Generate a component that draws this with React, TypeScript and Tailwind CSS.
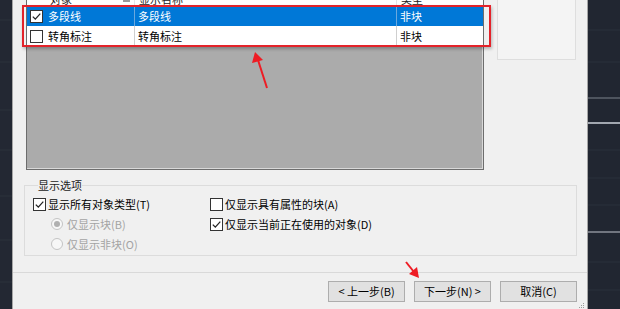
import React from 'react';

function Check({ checked }: { checked?: boolean }) {
  return (
    <span className="w-[13px] h-[13px] shrink-0 border border-[#333333] bg-white flex items-center justify-center">
      {checked && (
        <svg width="11" height="11" viewBox="0 0 11 11">
          <path d="M1.8 5.6 L4.3 8.1 L9.3 2.6" fill="none" stroke="#222222" strokeWidth="1.3" />
        </svg>
      )}
    </span>
  );
}

function Radio({ selected }: { selected?: boolean }) {
  return (
    <span className="w-[12px] h-[12px] shrink-0 rounded-full border border-[#c4c4c4] bg-[#f7f7f7] flex items-center justify-center">
      {selected && <span className="w-[6px] h-[6px] rounded-full bg-[#b0b0b0]" />}
    </span>
  );
}

function CadGrid({ lines }: { lines: { y: number; c: string; w?: number }[] }) {
  return (
    <svg className="w-full h-full" width="100%" height="309">
      {lines.map((l, i) => (
        <line key={i} x1="0" x2="100%" y1={l.y} y2={l.y} stroke={l.c} strokeWidth={l.w ?? 1} />
      ))}
    </svg>
  );
}

export default function App() {
  return (
    <div className="relative w-[620px] h-[309px] overflow-hidden flex bg-[#222731] font-['Noto_Sans_CJK_SC',sans-serif] text-[11px] text-black">
      {/* cad canvas left */}
      <div className="w-[12px] shrink-0 bg-[#232833]">
        <CadGrid
          lines={[
            { y: 20, c: '#2c323d' },
            { y: 62, c: '#2c323d' },
            { y: 110, c: '#2c323d' },
            { y: 150, c: '#2c323d' },
            { y: 196, c: '#2c323d' },
            { y: 240, c: '#2c323d' },
            { y: 282, c: '#2c323d' },
          ]}
        />
      </div>

      {/* dialog */}
      <div className="w-[576px] shrink-0 bg-[#f0f0f0] border-l border-r border-[#a6a6a6] flex flex-col">
        <div className="flex pl-[13px] pr-[10px]">
          {/* list view */}
          <div className="w-[458px] -mt-[15px] border border-[#6d6d6d] bg-white">
            <div className="h-[20px] flex relative text-[#222]">
              <div className="w-[107px] pl-[23px] pt-[6px] leading-[14px]">对象</div>
              <span className="absolute left-[96px] top-[14px] w-[7px] h-[2px] bg-[#9a9a9a]" />
              <div className="w-[262px] pl-[4px] pt-[6px] leading-[14px] border-l border-[#e5e5e5]">显示名称</div>
              <div className="flex-1 pl-[4px] pt-[6px] leading-[14px] border-l border-[#e5e5e5]">类型</div>
            </div>
            <div className="h-[20px] flex items-center bg-[#0078d7] text-white">
              <div className="w-[107px] h-full flex items-center pl-[3px] gap-[5px]">
                <Check checked />
                <span>多段线</span>
              </div>
              <div className="w-[262px] h-full flex items-center pl-[3px] border-l border-[#6aa8de]">多段线</div>
              <div className="flex-1 h-full flex items-center pl-[3px] border-l border-[#6aa8de]">非块</div>
            </div>
            <div className="h-[20px] flex items-center bg-white">
              <div className="w-[107px] h-full flex items-center pl-[3px] gap-[5px]">
                <Check />
                <span>转角标注</span>
              </div>
              <div className="w-[262px] h-full flex items-center pl-[3px] border-l border-[#cfcfcf]">转角标注</div>
              <div className="flex-1 h-full flex items-center pl-[3px] border-l border-[#cfcfcf]">非块</div>
            </div>
            <div className="h-[123px] bg-[#ababab] border-r border-b border-[#d8d8d8]" />
          </div>

          <div className="w-[79px] h-[63px] -mt-[3px] ml-[13px] bg-[#f4f4f4] border border-[#dedede]" />
        </div>

        {/* options group */}
        <fieldset className="ml-[11px] mr-[10px] mt-[7px] border border-[#dcdcdc] pl-[8px] pb-[1px]">
          <legend className="ml-[5px] px-0 leading-[16px] text-[#222]">显示选项</legend>
          <div className="flex pt-[1px]">
            <div className="w-[177px] flex flex-col">
              <div className="h-[20px] flex items-center gap-[2px]">
                <Check checked />
                <span>显示所有对象类型(T)</span>
              </div>
              <div className="h-[20px] flex items-center gap-[4px] pl-[18px] text-[#a3a3a3]">
                <Radio selected />
                <span>仅显示块(B)</span>
              </div>
              <div className="h-[20px] flex items-center gap-[4px] pl-[18px] text-[#a3a3a3]">
                <Radio />
                <span>仅显示非块(O)</span>
              </div>
            </div>
            <div className="flex flex-col">
              <div className="h-[20px] flex items-center gap-[2px]">
                <Check />
                <span>仅显示具有属性的块(A)</span>
              </div>
              <div className="h-[20px] flex items-center gap-[2px]">
                <Check checked />
                <span>仅显示当前正在使用的对象(D)</span>
              </div>
            </div>
          </div>
        </fieldset>

        <div className="mt-[16px] h-[1px] bg-[#d9d9d9]" />

        <div className="flex justify-end gap-[9px] pr-[10px] mt-[8px]">
          <button className="w-[77px] h-[21px] bg-[#e1e1e1] border border-[#adadad] leading-none">&lt; 上一步(B)</button>
          <button className="w-[77px] h-[21px] bg-[#e1e1e1] border border-[#adadad] leading-none">下一步(N) &gt;</button>
          <button className="w-[77px] h-[21px] bg-[#e1e1e1] border border-[#adadad] leading-none">取消(C)</button>
        </div>

        <div className="flex justify-end pr-[2px] mt-[1px]">
          <svg width="6" height="6" viewBox="0 0 6 6">
            <rect x="4" y="0" width="1" height="1" fill="#9a9a9a" />
            <rect x="2" y="2" width="1" height="1" fill="#9a9a9a" />
            <rect x="4" y="2" width="1" height="1" fill="#9a9a9a" />
            <rect x="0" y="4" width="1" height="1" fill="#9a9a9a" />
            <rect x="2" y="4" width="1" height="1" fill="#9a9a9a" />
            <rect x="4" y="4" width="1" height="1" fill="#9a9a9a" />
          </svg>
        </div>
      </div>

      {/* cad canvas right */}
      <div className="flex-1 bg-[#212631]">
        <CadGrid
          lines={[
            { y: 30, c: '#2b313c' },
            { y: 62, c: '#2b313c' },
            { y: 98, c: '#7d828c' },
            { y: 123, c: '#a2a7b0', w: 2 },
            { y: 150, c: '#2b313c' },
            { y: 178, c: '#2b313c' },
            { y: 205, c: '#2b313c' },
            { y: 232, c: '#8c919a', w: 1.5 },
            { y: 262, c: '#2b313c' },
            { y: 290, c: '#2b313c' },
          ]}
        />
      </div>

      {/* annotations */}
      <div className="absolute left-[22px] top-[5px] w-[469px] h-[42px] border-2 border-[#e3232a] shadow-[1px_2px_3px_rgba(0,0,0,0.25)] pointer-events-none" />
      <svg className="absolute left-0 top-0 pointer-events-none" width="620" height="309">
        <line x1="267" y1="88" x2="258" y2="60" stroke="#ee1c24" strokeWidth="2" />
        <polygon points="255,52 252,63 263,60" fill="#ee1c24" />
        <line x1="406" y1="262" x2="414" y2="272" stroke="#ee1c24" strokeWidth="2" />
        <polygon points="419,278 409,274 417,267" fill="#ee1c24" />
      </svg>
    </div>
  );
}
